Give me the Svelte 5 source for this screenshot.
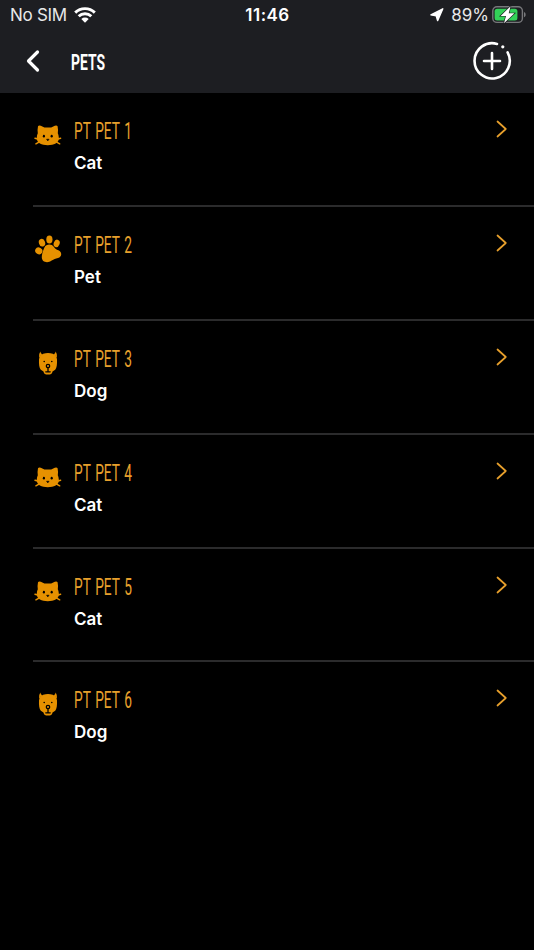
<script lang="ts">
  type Pet = { id: number; name: string; kind: 'Cat' | 'Dog' | 'Pet' };

  const pets: Pet[] = [
    { id: 1, name: 'PT PET 1', kind: 'Cat' },
    { id: 2, name: 'PT PET 2', kind: 'Pet' },
    { id: 3, name: 'PT PET 3', kind: 'Dog' },
    { id: 4, name: 'PT PET 4', kind: 'Cat' },
    { id: 5, name: 'PT PET 5', kind: 'Cat' },
    { id: 6, name: 'PT PET 6', kind: 'Dog' }
  ];
</script>

<div class="screen">
  <header>
    <div class="status">
      <div class="side">
        <span class="carrier">No SIM</span>
        <svg class="wifi" width="22" height="16" viewBox="0 0 22 16">
          <g fill="none" stroke="#fff" stroke-width="2.9">
            <path d="M1.2 5.6a14 14 0 0 1 19.6 0" />
            <path d="M4.7 9.3a9 9 0 0 1 12.6 0" />
          </g>
          <path d="M7.3 12a5.4 5.4 0 0 1 7.4 0L11 15.7z" fill="#fff" />
        </svg>
      </div>
      <span class="clock">11:46</span>
      <div class="side right">
        <svg class="location" width="14" height="14" viewBox="0 0 14 14">
          <path d="M12.8.8 7.6 12.6 6.200 7.900.9 6.900z" fill="#fff" stroke="#fff" stroke-width="1.400" stroke-linejoin="round" />
        </svg>
        <span class="percent">89%</span>
        <svg class="battery" width="35" height="18" viewBox="0 0 35 18">
          <rect x=".8" y=".8" width="29.6" height="15.6" rx="4.2" fill="none" stroke="#77787b" stroke-width="1.4" />
          <rect x="2.6" y="2.7" width="22.8" height="11.8" rx="2.5" fill="#32d158" />
          <path d="M32 6c2.2.8 2.2 4.4 0 5.2z" fill="#77787b" />
          <path d="M18.6.2 8.600 9.900h5.400L12 17.300 22.400 7.300h-5.700z" fill="#fff" stroke="#1d1e22" stroke-width="1.300" paint-order="stroke" />
        </svg>
      </div>
    </div>

    <nav>
      <button class="back" aria-label="Back">
        <svg width="14" height="24" viewBox="0 0 14 24">
          <path d="M12.5 3 3.500 12l9 9" fill="none" stroke="#fff" stroke-width="3.2" stroke-linecap="round" stroke-linejoin="round" />
        </svg>
      </button>
      <h1>
        <svg width="36" height="26">
          <text x="0" y="19.500" textLength="34" lengthAdjust="spacingAndGlyphs">PETS</text>
        </svg>
      </h1>
      <button class="add" aria-label="Add pet">
        <svg width="40" height="40" viewBox="0 0 40 40">
          <g fill="none" stroke="#fff" stroke-width="2.6" stroke-linecap="round">
            <path d="M25 2.9A17.6 17.6 0 1 0 35.6 11.4" />
            <path d="M20 12v16M12 20h16" />
          </g>
          <circle cx="30.8" cy="5.8" r="1.6" fill="#fff" />
        </svg>
      </button>
    </nav>
  </header>

  <ul>
    {#each pets as pet (pet.id)}
      <li>
        <div class="icon">
          {#if pet.kind === 'Cat'}
            <svg width="28" height="28" viewBox="0 0 28 28">
              <path d="M4 5.200Q4.800 3.900 6.800 4.700L10.400 6.400h6.800L20.800 4.700Q22.800 3.900 23.600 5.200 24.300 8.500 23.800 12.200 24.900 14.300 24.900 17c0 4.800-5 7.200-11.100 7.200S2.700 21.800 2.700 17Q2.700 14.300 3.800 12.200 3.300 8.500 4 5.200z" fill="#e69100" />
              <path d="M1 17.300l3.500 1M1.900 22.800l3.500-2M26.600 17.300l-3.500 1M25.700 22.800l-3.500-2" stroke="#e69100" stroke-width="1.5" stroke-linecap="round" />
              <ellipse cx="9.900" cy="15.200" rx="1.100" ry="1.400" />
              <ellipse cx="17.700" cy="15.200" rx="1.100" ry="1.400" />
              <path d="M12.500 18.200h2.600l-1.300 1.700z" stroke="#000" stroke-width=".5" stroke-linejoin="round" />
            </svg>
          {:else if pet.kind === 'Dog'}
            <svg width="28" height="28" viewBox="0 0 28 28">
              <path d="M9.2 4.800Q14 3.200 18.800 4.800q3.800 1.400 4.200 5.600c.2 4.600-.2 8.400-1.800 10.400l-2.700 1.600q-.5 3.200-4.500 3.200t-4.500-3.200l-2.700-1.600c-1.600-2-2-5.800-1.800-10.400q.4-4.200 4.200-5.600z" fill="#e69100" />
              <path d="M6.300 2.400Q4.600 5 5 8.500l3.300-3.300Q6.600 4.400 6.300 2.400zM21.700 2.400Q23.400 5 23 8.500l-3.300-3.300q1.700-.8 2-2.800z" fill="#e69100" />
              <circle cx="10.200" cy="12.500" r=".8" />
              <circle cx="17.800" cy="12.500" r=".8" />
              <g fill="none" stroke="#000" stroke-width="1.300">
                <circle cx="14" cy="17" r="1.700" />
                <path d="M14 18.700v3.700M11.400 22.700q1.600.6 2.600-.3 1 .9 2.600.3" />
              </g>
            </svg>
          {:else}
            <svg width="28" height="28" viewBox="0 0 28 28">
              <g fill="#e69100">
                <ellipse cx="4.8" cy="15.8" rx="3.700" ry="3.300" transform="rotate(30 4.8 15.8)" />
                <ellipse cx="8" cy="7.700" rx="3.100" ry="3.900" transform="rotate(-18 8 7.700)" />
                <ellipse cx="15.400" cy="4.600" rx="3.100" ry="4" />
                <ellipse cx="22.700" cy="8.400" rx="2.900" ry="3.800" transform="rotate(22 22.700 8.400)" />
                <path d="M10.400 12.400c1.800-3.600 7.300-3.900 9.600-.4 1.200 1.800 2.300 2.400 4.400 3.300 4 1.700 3.600 6.800-.4 7.600-2.700.5-4 1-6.300 2.700-4.300 3.100-10.100 1.500-9.900-3.600.1-4 1.400-6.500 2.600-9.600z" />
              </g>
            </svg>
          {/if}
        </div>
        <div class="info">
          <svg class="name" width="62" height="28">
            <text x="0" y="19.500" textLength="58" lengthAdjust="spacingAndGlyphs">{pet.name}</text>
          </svg>
          <span class="kind">{pet.kind}</span>
        </div>
        <svg class="chevron" width="12" height="18" viewBox="0 0 12 18">
          <path d="M1.5 1.5 9.8 9l-8.3 7.5" fill="none" stroke="#e8a02c" stroke-width="1.7" stroke-linecap="round" stroke-linejoin="round" />
        </svg>
      </li>
    {/each}
  </ul>
</div>

<style>
  :global(body) { background: #000; }
  .screen {
    height: 950px;
    overflow: hidden;
    background: #000;
    color: #fff;
    font-family: Inter, "Liberation Sans", sans-serif;
  }
  svg { display: block; flex-shrink: 0; overflow: visible; }

  header { height: 93px; background: #1d1e22; }
  .status {
    display: grid;
    grid-template-columns: 1fr auto 1fr;
    align-items: center;
    height: 30px;
    padding: 0 7px 0 10px;
    font-size: 17px;
  }
  .side { display: flex; align-items: center; color: #e8e8e9; }
  .right { justify-content: flex-end; }
  .carrier { letter-spacing: -0.3px; }
  .wifi { margin-left: 7px; }
  .clock { margin-left: -2px; font-weight: 600; letter-spacing: 0.5px; }
  .location { margin-right: 7px; }
  .battery { margin-left: 3px; }

  nav { display: flex; align-items: center; height: 62px; padding: 0 22px 0 25px; }
  button { padding: 0; border: 0; background: none; cursor: pointer; }
  h1 { margin: 4px auto 0 32px; }
  h1 text { font: 700 22.5px Roboto, sans-serif; fill: #fff; }

  ul { margin: 0; padding: 0; list-style: none; }
  li {
    display: flex;
    align-items: flex-start;
    box-sizing: border-box;
    height: 113.9px;
    margin-left: 33px;
    padding: 26px 26px 0 1px;
    border-bottom: 2px solid #2b2b2c;
  }
  li:last-child { border-bottom: 0; }
  .icon { margin: 2px 12px 0 0; }
  .info { flex: 1; }
  .name text { font: 400 23px Roboto, sans-serif; word-spacing: 2px; fill: #e8a02c; }
  .kind { display: block; margin-top: 5px; font-size: 17px; line-height: 22px; font-weight: 600; }
  .chevron { margin-top: 1px; }
</style>
